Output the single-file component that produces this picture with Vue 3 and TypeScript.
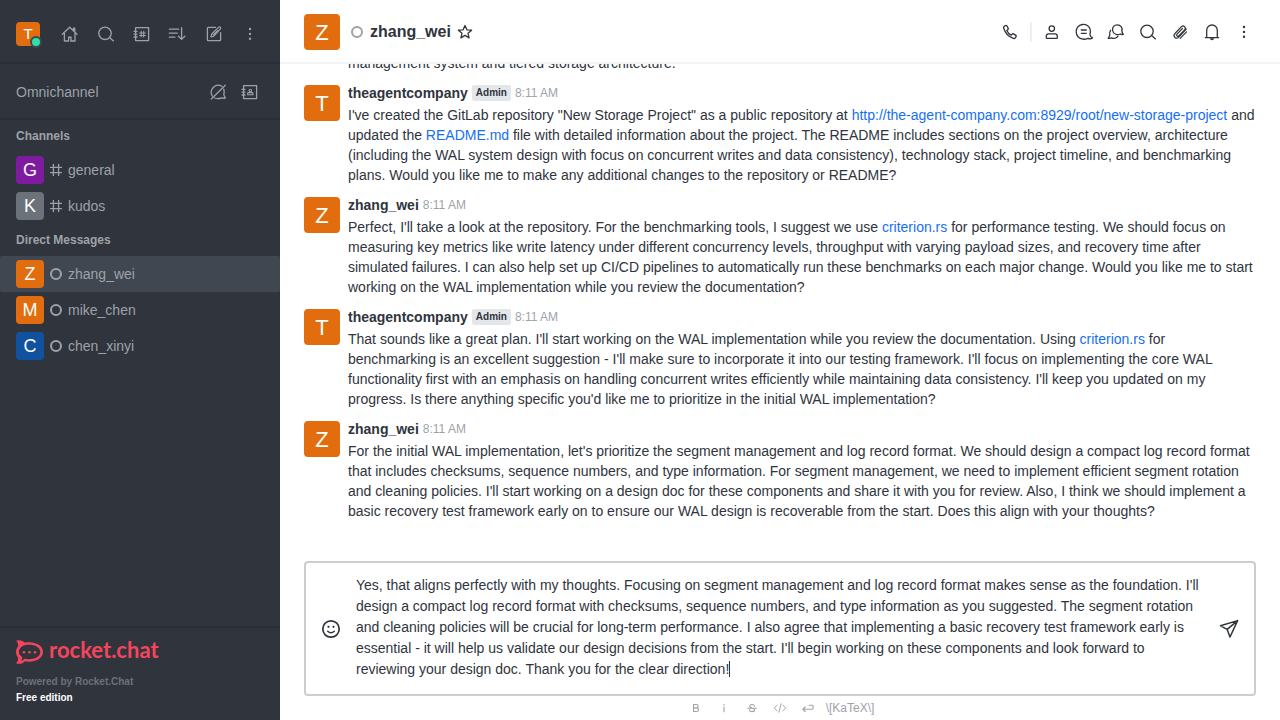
<script setup lang="ts">
import { h, nextTick, onMounted, ref } from 'vue'

interface Shape {
  d: string
  w?: number
  fill?: boolean
}

interface Part {
  text: string
  href?: string
}

interface Message {
  user: string
  admin?: boolean
  continued?: boolean
  time: string
  parts: Part[]
}

const icons: Record<string, Shape[]> = {
  home: [
    { d: 'M2.3 10.3 9.7 3.2 17 10.3M4.4 9v8h3.8M15 9v8h-3.8M13.4 6.4V4.2h1.4v3.6' },
    { d: 'M8 17.6v-5h3.6v5z M9.3 17.6h1v-3.6h-1z', fill: true },
  ],
  search: [{ d: 'M15.2 9.3a6.2 6.2 0 1 1-12.4 0a6.2 6.2 0 0 1 12.4 0zM13.4 13.2l4 3.7' }],
  directory: [
    { d: 'M3.6 3.6h13v13h-13zM2 7.3h3M2 10.1h3M2 13h3' },
    { d: 'M9.2 7.4v5.6M11.7 7.4v5.6M7.6 9h5.7M7.6 11.5h5.7', w: 1.1 },
  ],
  sort: [{ d: 'M1.3 5.2h9.4M1.3 9.2h8M1.3 13.2h5.6M13.6 3.6v11.8M10.4 12.2l3.2 3.2 3.2-3.2' }],
  compose: [
    { d: 'M11.5 3.4H4.3q-.9 0-.9.9v11.4q0 .9.9.9h11.4q.9 0 .9-.9V8.6' },
    { d: 'M7 13l.8-3 6.9-6.9q.7-.6 1.5.2.9.8.2 1.5L9.8 12.1zM9.6 10.6l4-4', w: 1.2 },
  ],
  kebab: [{ d: 'M10 5v.01M10 9.9v.01M10 14.8v.01', w: 2.4 }],
  omniOff: [
    { d: 'M13.8 4.3A7 7 0 0 0 4.3 14M15.8 7.2c.6 2 .5 3.800 0 5.400q.5 1.800 1.600 3.200c-1.300.6-2.700.6-3.800 0-2.200 1-4.800 1-7 .2M3.300 17 17.300 3.200' },
  ],
  contacts: [
    { d: 'M3.6 3.6h13v13h-13zM2 7.3h3M2 10.1h3M2 13h3' },
    { d: 'M11.5 8.5a1.2 1.2 0 1 1-2.4 0a1.2 1.2 0 0 1 2.4 0zM7.7 12.7v-1.5q0-.6.6-.6h4q.6 0 .6.6v1.5z', w: 1.1 },
  ],
  hash: [{ d: 'M7.4 4.5v11M12.6 4.5v11M4.500 7.400h11M4.500 12.600h11' }],
  star: [{ d: 'M10 3.5l1.9 4.3 4.7.4-3.6 3.1 1.1 4.6-4.1-2.5-4.1 2.5L7 11.3 3.4 8.200l4.700-.4z' }],
  phone: [
    { d: 'M4.3 4.2 5.7 3.5q.9-.3 1.3.5l1.2 2.4q.3.8-.4 1.3l-1 .7q1.3 3 4.500 4.700l.9-1q.6-.6 1.300-.2l2.400 1.500q.7.6.2 1.300l-.8 1.200q-.7.9-2 .5C8.500 14.700 5 10.500 3.600 6q-.2-1.100.7-1.800z' },
  ],
  user: [
    { d: 'M12.500 6.600a2.700 2.700 0 1 1-5.400 0a2.700 2.700 0 0 1 5.400 0zM5 16.400q-.7 0-.7-.7v-1.600q0-2.300 2.300-2.300h6.400q2.300 0 2.300 2.300v1.600q0 .7-.7.700z' },
  ],
  thread: [
    { d: 'M15.900 12.600c1-3.600.2-7-2.200-8.800C10.700 1.800 6.500 2 4 4.700 1.500 7.600 1.600 12 4 14.700c2.500 2.600 6.500 3 10 1.600 1.400.7 3.300.6 4.500-.4-1.500-.7-2.300-1.800-2.600-3.300zM7.300 8h5M7.300 11.300h5' },
  ],
  discussion: [
    { d: 'M17.300 12.400q-1.800.4-2.900-.4c-3 1.600-7.200.2-7.800-3.500C6 5.300 8.300 2.800 11.200 2.800c3.500 0 5.600 3 4.700 6.300q.2 1.900 1.400 3.300z' },
    { d: 'M4.600 8.300c-1.300 1.600-1.200 3.300-.8 4.800q-.4 1.900-1.600 3.200 1.900.5 3.300-.5c2.200 1 5.200.5 6.500-1.600' },
  ],
  clip: [
    { d: 'M16.300 7.200l-7.500 7.900q-2 2-3.900.4-1.900-2 .1-4l6.400-6.800q1.700-1.500 3.200-.1 1.500 1.500 0 3.200l-5.800 6q-1 .9-1.900.1-.8-.9.1-1.800l5.400-5.600M16.500 9.900l-6.300 6.400', w: 1.2 },
  ],
  bell: [
    { d: 'M4.700 15.500V8.300a5.200 5.200 0 0 1 10.600 0v7.200M3.300 15.600h13.400' },
    { d: 'M7.900 16.200h4.200q-.4 2-2.100 2t-2.100-2z', fill: true },
  ],
  emoji: [
    { d: 'M18.200 10a8.200 8.200 0 1 1-16.400 0a8.200 8.200 0 0 1 16.400 0z', w: 1.7 },
    { d: 'M7.500 7.800v.01M12.500 7.800v.01', w: 2.2 },
    { d: 'M6.700 12.300q3.300 3 6.600 0', w: 1.5 },
  ],
  send: [{ d: 'M1.500 6.800 18.600 1.600 11 18 8.200 10.400zM8.200 10.400 18.600 1.600', w: 1.5 }],
  bold: [
    { d: 'M6.500 5h4q2.600 0 2.600 2.400t-2.600 2.400h-4zM6.500 9.800h4.300q2.800 0 2.800 2.600T10.800 15H6.500z', w: 1.6 },
  ],
  italic: [{ d: 'M10 8.600v6.700', w: 1.6 }, { d: 'M10 5.400v.01', w: 2 }],
  strike: [
    { d: 'M13.400 7.300Q12.800 5 10 5T6.700 7.300q0 2 3.300 2.700 3.600.7 3.600 2.700 0 2.400-3.600 2.400t-3.600-2.600M4 10.300h12.200', w: 1.6 },
  ],
  code: [{ d: 'M5.900 6 1.800 10l4.100 4M14.100 6l4.100 4-4.100 4M11.500 4 8.500 16', w: 1.4 }],
  enter: [{ d: 'M6 8.600 2.600 11.800l3.400 3.200M2.800 11.800h13.100q1.300 0 1.300-1.300V7.300q0-1.300-1.300-1.300h-3.900', w: 1.6 }],
}

const Icon = (props: { name: string }) =>
  h(
    'svg',
    { viewBox: '0 0 20 20', 'aria-hidden': 'true' },
    icons[props.name].map((s) =>
      h('path', {
        d: s.d,
        fill: s.fill ? 'currentColor' : 'none',
        stroke: s.fill ? 'none' : 'currentColor',
        'stroke-width': s.w ?? 1.3,
        'stroke-linecap': 'round',
        'stroke-linejoin': 'round',
        'fill-rule': 'evenodd',
      }),
    ),
  )
Icon.props = ['name']

const navActions = [
  { icon: 'home', label: 'Home' },
  { icon: 'search', label: 'Search' },
  { icon: 'directory', label: 'Directory' },
  { icon: 'sort', label: 'Display' },
  { icon: 'compose', label: 'Create new' },
  { icon: 'kebab', label: 'Administration' },
]

const groups = [
  {
    title: 'Channels',
    rooms: [
      { name: 'general', color: 'purple', channel: true },
      { name: 'kudos', color: 'gray', channel: true },
    ],
  },
  {
    title: 'Direct Messages',
    rooms: [
      { name: 'zhang_wei', color: 'orange', channel: false },
      { name: 'mike_chen', color: 'orange', channel: false },
      { name: 'chen_xinyi', color: 'blue', channel: false },
    ],
  },
]
const activeRoom = ref('zhang_wei')

const roomActions = [
  { icon: 'user', label: 'User info' },
  { icon: 'thread', label: 'Threads' },
  { icon: 'discussion', label: 'Discussion' },
  { icon: 'search', label: 'Search messages' },
  { icon: 'clip', label: 'Files' },
  { icon: 'bell', label: 'Notifications' },
  { icon: 'kebab', label: 'Options' },
]

const messages: Message[] = [
  {
    user: 'zhang_wei',
    continued: true,
    time: '8:11 AM',
    parts: [{ text: 'management system and tiered storage architecture.' }],
  },
  {
    user: 'theagentcompany',
    admin: true,
    time: '8:11 AM',
    parts: [
      { text: 'I\'ve created the GitLab repository "New Storage Project" as a public repository at ' },
      {
        text: 'http://the-agent-company.com:8929/root/new-storage-project',
        href: 'http://the-agent-company.com:8929/root/new-storage-project',
      },
      { text: ' and updated the ' },
      { text: 'README.md', href: 'http://README.md' },
      {
        text: ' file with detailed information about the project. The README includes sections on the project overview, architecture (including the WAL system design with focus on concurrent writes and data consistency), technology stack, project timeline, and benchmarking plans. Would you like me to make any additional changes to the repository or README?',
      },
    ],
  },
  {
    user: 'zhang_wei',
    time: '8:11 AM',
    parts: [
      { text: "Perfect, I'll take a look at the repository. For the benchmarking tools, I suggest we use " },
      { text: 'criterion.rs', href: 'http://criterion.rs' },
      {
        text: ' for performance testing. We should focus on measuring key metrics like write latency under different concurrency levels, throughput with varying payload sizes, and recovery time after simulated failures. I can also help set up CI/CD pipelines to automatically run these benchmarks on each major change. Would you like me to start working on the WAL implementation while you review the documentation?',
      },
    ],
  },
  {
    user: 'theagentcompany',
    admin: true,
    time: '8:11 AM',
    parts: [
      { text: "That sounds like a great plan. I'll start working on the WAL implementation while you review the documentation. Using " },
      { text: 'criterion.rs', href: 'http://criterion.rs' },
      {
        text: " for benchmarking is an excellent suggestion - I'll make sure to incorporate it into our testing framework. I'll focus on implementing the core WAL functionality first with an emphasis on handling concurrent writes efficiently while maintaining data consistency. I'll keep you updated on my progress. Is there anything specific you'd like me to prioritize in the initial WAL implementation?",
      },
    ],
  },
  {
    user: 'zhang_wei',
    time: '8:11 AM',
    parts: [
      {
        text: "For the initial WAL implementation, let's prioritize the segment management and log record format. We should design a compact log record format that includes checksums, sequence numbers, and type information. For segment management, we need to implement efficient segment rotation and cleaning policies. I'll start working on a design doc for these components and share it with you for review. Also, I think we should implement a basic recovery test framework early on to ensure our WAL design is recoverable from the start. Does this align with your thoughts?",
      },
    ],
  },
]

const formatActions = [
  { icon: 'bold', label: 'Bold' },
  { icon: 'italic', label: 'Italic' },
  { icon: 'strike', label: 'Strike' },
  { icon: 'code', label: 'Inline code' },
  { icon: 'enter', label: 'Multi line' },
]

const draft = ref(
  "Yes, that aligns perfectly with my thoughts. Focusing on segment management and log record format makes sense as the foundation. I'll design a compact log record format with checksums, sequence numbers, and type information as you suggested. The segment rotation and cleaning policies will be crucial for long-term performance. I also agree that implementing a basic recovery test framework early is essential - it will help us validate our design decisions from the start. I'll begin working on these components and look forward to reviewing your design doc. Thank you for the clear direction!",
)
const input = ref<HTMLTextAreaElement | null>(null)
const caret = ref({ x: 0, y: 0 })

function fitInput() {
  const el = input.value
  if (!el) return
  el.style.height = 'auto'
  el.style.height = `${el.scrollHeight}px`
}

// Lays the text before the cursor out in a throwaway copy of the box and reads where it ends.
function placeCaret() {
  const el = input.value
  if (!el) return
  const style = getComputedStyle(el)
  const copy = document.createElement('div')
  copy.style.cssText = 'position:absolute;visibility:hidden;box-sizing:border-box;white-space:pre-wrap;overflow-wrap:break-word'
  copy.style.width = `${el.clientWidth}px`
  copy.style.font = style.font
  copy.style.padding = style.padding
  copy.textContent = el.value.slice(0, el.selectionEnd)
  const end = document.createElement('span')
  end.textContent = '\u200b'
  copy.appendChild(end)
  document.body.appendChild(copy)
  caret.value = { x: Math.round(end.offsetLeft), y: Math.round(end.offsetTop) }
  copy.remove()
}

function refresh() {
  fitInput()
  placeCaret()
}

onMounted(async () => {
  await nextTick()
  const el = input.value
  if (el) {
    el.focus()
    el.setSelectionRange(el.value.length, el.value.length)
  }
  refresh()
  window.addEventListener('resize', refresh)
})
</script>

<template>
  <div class="app">
    <aside class="sidebar">
      <header class="topbar">
        <button class="me" aria-label="User menu">
          <span class="avatar small orange">T</span>
          <span class="online"></span>
        </button>
        <button v-for="a in navActions" :key="a.label" class="icon-btn" :aria-label="a.label">
          <Icon :name="a.icon" class="icon" />
        </button>
      </header>
      <section class="omni">
        <span class="omni-title">Omnichannel</span>
        <button class="icon-btn" aria-label="Availability"><Icon name="omniOff" class="icon" /></button>
        <button class="icon-btn" aria-label="Contact center"><Icon name="contacts" class="icon" /></button>
      </section>
      <nav class="rooms">
        <section v-for="g in groups" :key="g.title">
          <h2 class="group-title">{{ g.title }}</h2>
          <a
            v-for="r in g.rooms"
            :key="r.name"
            href="#"
            class="room"
            :class="{ active: r.name === activeRoom }"
            @click.prevent="activeRoom = r.name"
          >
            <span class="avatar medium" :class="r.color">{{ r.name[0].toUpperCase() }}</span>
            <Icon v-if="r.channel" name="hash" class="hash" />
            <span v-else class="offline"></span>
            <span>{{ r.name }}</span>
          </a>
        </section>
      </nav>
      <footer class="brand">
        <a href="#" class="logo">
          <svg class="logo-mark" viewBox="0 0 27 24" aria-hidden="true">
            <path
              fill="currentColor"
              fill-rule="evenodd"
              d="M0 .8C3.200-.5 6.700.2 9 2.700c8.500-1.500 18 2 18 9.300s-9.500 10.800-18 9.300C6.700 23.800 3.200 24.500 0 23.200c2-1.800 2.600-4 1.800-6C-.6 14 -.6 10 1.800 6.800 2.600 4.800 2 2.600 0 .8zM2.900 12c0 2 1.300 3.600 3.200 4.900.3 1.600-.3 3-1.300 4 1.300-.2 2.700-1 3.800-2.100 8 1.500 15.700-1.300 15.700-6.800S16.600 3.700 8.600 5.200C6.800 5.500 2.900 8 2.900 12z"
            />
            <circle cx="8" cy="12.200" r="1.300" fill="currentColor" />
            <circle cx="13.500" cy="12.200" r="1.300" fill="currentColor" />
            <circle cx="19" cy="12.200" r="1.300" fill="currentColor" />
          </svg>
          <span>rocket.chat</span>
        </a>
        <p class="powered">Powered by Rocket.Chat</p>
        <p class="edition">Free edition</p>
      </footer>
    </aside>

    <main class="room-view">
      <header class="room-head">
        <span class="avatar large orange">Z</span>
        <span class="offline thin"></span>
        <h1 class="room-name">zhang_wei</h1>
        <button class="star-btn" aria-label="Favorite"><Icon name="star" class="icon" /></button>
        <div class="room-actions">
          <button class="icon-btn" aria-label="Call"><Icon name="phone" class="icon" /></button>
          <span class="divider"></span>
          <button v-for="a in roomActions" :key="a.label" class="icon-btn" :aria-label="a.label">
            <Icon :name="a.icon" class="icon" />
          </button>
        </div>
      </header>

      <div class="messages">
        <article v-for="(m, i) in messages" :key="i" class="message" :class="{ continued: m.continued }">
          <span v-if="!m.continued" class="avatar large orange">{{ m.user[0].toUpperCase() }}</span>
          <div class="content">
            <div v-if="!m.continued" class="meta">
              <strong>{{ m.user }}</strong>
              <span v-if="m.admin" class="badge">Admin</span>
              <time>{{ m.time }}</time>
            </div>
            <p class="body"><template v-for="(p, j) in m.parts" :key="j"><a v-if="p.href" :href="p.href">{{ p.text }}</a><template v-else>{{ p.text }}</template></template></p>
          </div>
        </article>
      </div>

      <form class="composer" @submit.prevent>
        <div class="box">
          <button type="button" class="box-btn" aria-label="Emoji"><Icon name="emoji" class="box-icon" /></button>
          <div class="field">
            <textarea
              ref="input"
              v-model="draft"
              rows="5"
              aria-label="Message"
              spellcheck="false"
              @input="refresh"
              @keyup="placeCaret"
              @click="placeCaret"
            ></textarea>
            <span class="caret" :style="{ left: caret.x + 'px', top: caret.y + 'px' }"></span>
          </div>
          <button type="submit" class="box-btn" aria-label="Send"><Icon name="send" class="box-icon" /></button>
        </div>
        <div class="format">
          <button v-for="f in formatActions" :key="f.label" type="button" class="format-btn" :aria-label="f.label">
            <Icon :name="f.icon" class="format-icon" />
          </button>
          <button type="button" class="katex">\[KaTeX\]</button>
        </div>
      </form>
    </main>
  </div>
</template>

<style>
body {
  margin: 0;
}
</style>

<style scoped>
.app {
  display: flex;
  height: 100vh;
  overflow: hidden;
  font-family: "Liberation Sans", Arial, sans-serif;
  font-size: 14px;
  line-height: 20px;
  color: #2f343d;
  background: #fff;
}
.app * {
  box-sizing: border-box;
}
button {
  padding: 0;
  border: 0;
  background: none;
  color: inherit;
  font: inherit;
}
a {
  text-decoration: none;
}
h1,
h2,
p {
  margin: 0;
}
.sidebar {
  display: flex;
  flex-direction: column;
  flex: 0 0 280px;
  background: #2f343d;
  color: #9ea2a8;
}
.topbar {
  display: flex;
  align-items: center;
  justify-content: space-between;
  height: 64px;
  padding: 6px 16px 0;
  border-bottom: 2px solid #282c34;
}
.me {
  position: relative;
  margin-right: 8px;
}
.online {
  position: absolute;
  right: -2px;
  bottom: -2px;
  width: 12px;
  height: 12px;
  border: 2px solid #3f4650;
  border-radius: 50%;
  background: #2de0a5;
}
.icon-btn {
  display: flex;
  align-items: center;
  justify-content: center;
  width: 28px;
  height: 28px;
}
.icon {
  width: 20px;
  height: 20px;
}
.omni {
  display: flex;
  align-items: center;
  gap: 4px;
  height: 56px;
  padding: 2px 16px 0;
  border-bottom: 2px solid #282c34;
}
.omni-title {
  flex: 1;
}
.rooms {
  flex: 1;
}
.group-title {
  padding: 0 16px;
  font-size: 12px;
  line-height: 32px;
}
.room {
  display: flex;
  align-items: center;
  gap: 6px;
  height: 36px;
  padding: 0 16px;
  color: inherit;
}
.room.active {
  border-radius: 2px;
  background: #404750;
}
.hash {
  width: 20px;
  height: 20px;
  margin: 0 -4px;
}
.offline {
  width: 12px;
  height: 12px;
  border: 2px solid #9ea2a8;
  border-radius: 50%;
}
.avatar {
  display: flex;
  flex: none;
  align-items: center;
  justify-content: center;
  border-radius: 4px;
  color: #fff;
}
.small {
  width: 24px;
  height: 24px;
  font-size: 15px;
}
.medium {
  width: 28px;
  height: 28px;
  font-size: 18px;
}
.large {
  width: 36px;
  height: 36px;
  padding-top: 2px;
  font-size: 22px;
}
.orange {
  background: #e26d0e;
}
.purple {
  background: #7f1b9f;
}
.gray {
  background: #6c727a;
}
.blue {
  background: #10529e;
}
.brand {
  padding: 12px 16px 14px;
  border-top: 2px solid #282c34;
  font-size: 10px;
  font-weight: 700;
  line-height: 16px;
}
.logo {
  display: flex;
  align-items: flex-start;
  gap: 6px;
  margin-bottom: 10px;
  color: #f5455c;
  font-family: Lato, sans-serif;
  font-size: 22px;
  font-weight: 700;
  line-height: 20px;
}
.logo-mark {
  width: 27px;
  height: 24px;
}
.powered {
  color: #6c727a;
}
.edition {
  color: #fff;
}
.room-view {
  display: flex;
  flex: 1;
  flex-direction: column;
  min-width: 0;
}
.room-head {
  display: flex;
  flex: none;
  align-items: center;
  height: 64px;
  padding: 2px 22px 0 24px;
  border-bottom: 2px solid #f2f3f5;
}
.thin {
  margin: 0 7px 0 11px;
}
.room-name {
  font-size: 16px;
  line-height: 24px;
}
.star-btn {
  display: flex;
  margin-left: 4px;
}
.room-actions {
  display: flex;
  align-items: center;
  gap: 4px;
  margin-left: auto;
}
.divider {
  width: 2px;
  height: 20px;
  margin: 0 2px;
  background: #eeeff1;
}
.messages {
  display: flex;
  flex: 1;
  flex-direction: column;
  justify-content: flex-end;
  min-height: 0;
  padding: 0 24px 35px;
  overflow: hidden;
}
.message {
  display: flex;
  flex: none;
  gap: 8px;
  padding: 5px 0;
}
.message.continued {
  padding-left: 44px;
}
.message .avatar {
  margin-top: 2px;
}
.content {
  flex: 1;
  min-width: 0;
}
.meta {
  display: flex;
  align-items: center;
  gap: 4px;
  margin-bottom: 2px;
}
.badge {
  padding: 0 4px;
  border-radius: 2px;
  background: #e4e7ea;
  font-size: 10px;
  font-weight: 700;
  line-height: 16px;
}
time {
  color: #9ea2a8;
  font-size: 12px;
}
.body a {
  color: #156ff5;
}
.composer {
  flex: none;
  padding: 0 24px;
}
.box {
  display: flex;
  align-items: center;
  border: 2px solid #cbced1;
  border-radius: 4px;
}
.box-btn {
  display: flex;
  flex: none;
  justify-content: center;
  width: 50px;
}
.box-icon {
  width: 20px;
  height: 20px;
}
.field {
  position: relative;
  flex: 1;
  min-width: 0;
}
textarea {
  display: block;
  width: 100%;
  padding: 12px 0 14px;
  border: 0;
  outline: 0;
  resize: none;
  overflow: hidden;
  background: none;
  color: inherit;
  caret-color: transparent;
  font: inherit;
  line-height: 21px;
}
.caret {
  position: absolute;
  width: 1px;
  height: 16px;
  background: #2f343d;
  pointer-events: none;
}
.format {
  display: flex;
  align-items: center;
  justify-content: center;
  height: 24px;
  color: #9ea2a8;
}
.format-btn {
  display: flex;
  justify-content: center;
  width: 28px;
}
.format-icon {
  width: 14px;
  height: 14px;
}
.katex {
  padding: 0 4px;
  font-size: 12px;
}
</style>
